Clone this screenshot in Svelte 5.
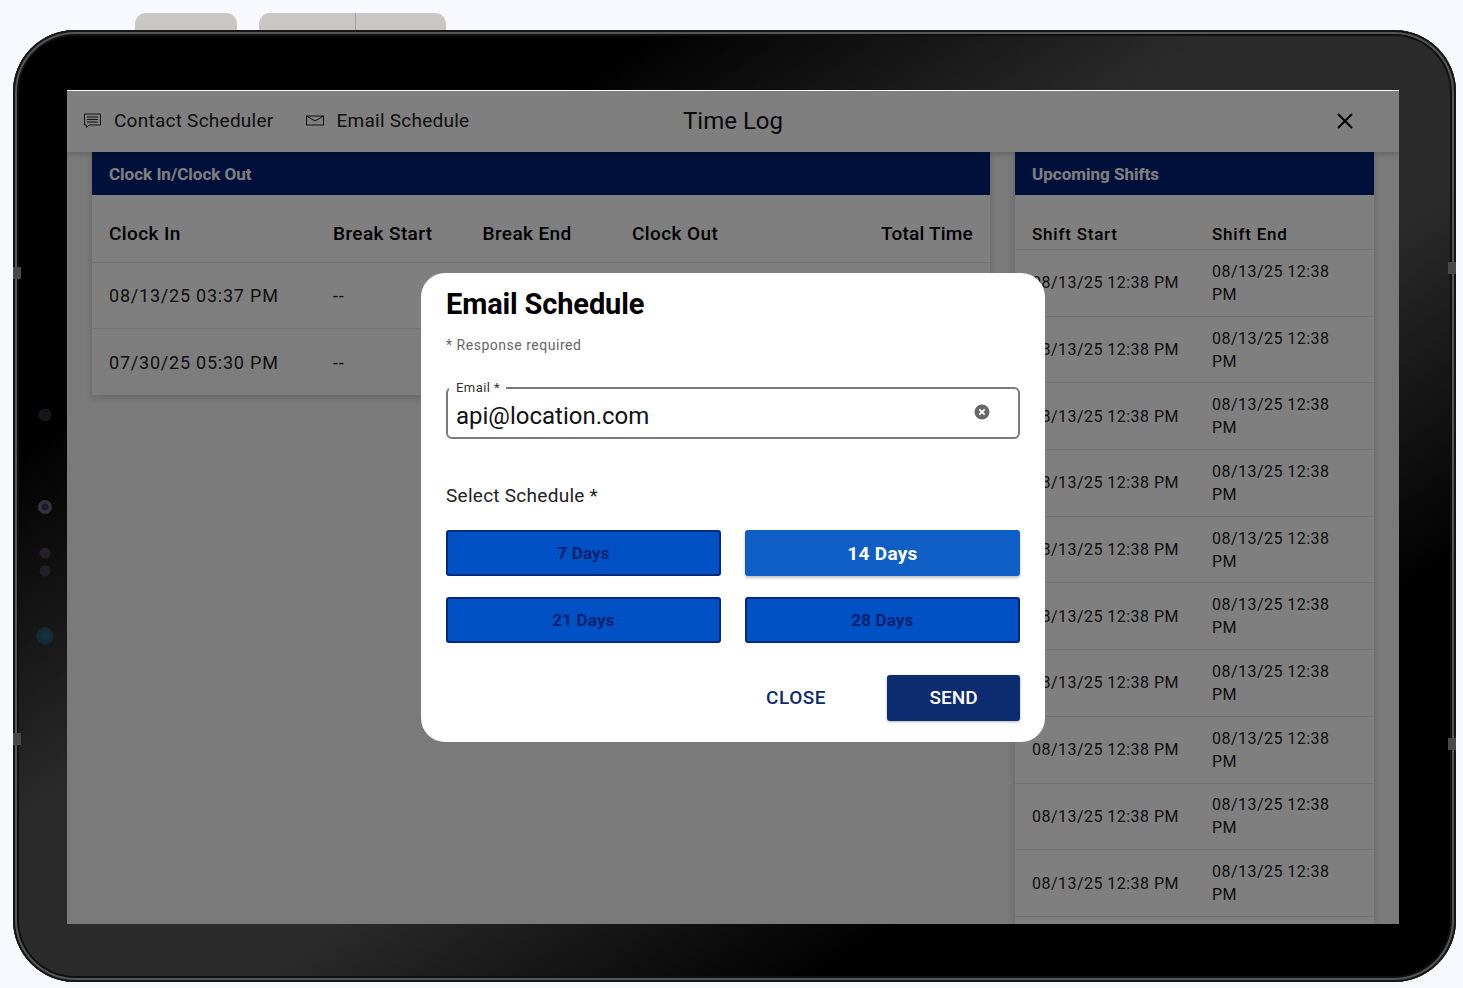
<script>
  const shifts = Array.from({ length: 10 });
</script>

<div class="page">
  <div class="hw top a"></div>
  <div class="hw top b"></div>
  <div class="hw side l1"></div>
  <div class="hw side l2"></div>
  <div class="hw side r1"></div>
  <div class="hw side r2"></div>

  <div class="device">
    <div class="sensors">
      <i class="dot s1"></i>
      <i class="dot s2"></i>
      <i class="dot s3"></i>
      <i class="dot s3b"></i>
      <i class="dot s4"></i>
    </div>

    <div class="screen">
      <header class="topbar">
        <div class="action first">
          <svg width="19" height="16" viewBox="0 0 19 16" fill="none" stroke="#222" stroke-width="1">
            <path d="M1.5 1h16v11H6l-2.500 2.500V12h-2z" />
            <path d="M4 4h11M4 6.500h11M4 9h11" />
          </svg>
          <span>Contact Scheduler</span>
        </div>
        <div class="action second">
          <svg width="18" height="11" viewBox="0 0 18 11" fill="none" stroke="#222" stroke-width="1">
            <rect x="0.500" y="1" width="17" height="9" />
            <path d="M0.500 1l8.500 5 8.500-5" />
          </svg>
          <span>Email Schedule</span>
        </div>
        <h1>Time Log</h1>
        <svg class="x" width="18" height="18" viewBox="0 0 18 18" fill="none" stroke="#000" stroke-width="2">
          <path d="M2 2l14 14M16 2L2 16" />
        </svg>
      </header>

      <main class="content">
        <section class="card left">
          <h2>Clock In/Clock Out</h2>
          <div class="lrow head">
            <span>Clock In</span><span>Break Start</span><span>Break End</span><span>Clock Out</span><span class="tot">Total Time</span>
          </div>
          <div class="lrow">
            <span>08/13/25 03:37 PM</span><span>--</span><span></span><span></span><span></span>
          </div>
          <div class="lrow shade">
            <span>07/30/25 05:30 PM</span><span>--</span><span></span><span></span><span></span>
          </div>
        </section>

        <section class="card right">
          <h2>Upcoming Shifts</h2>
          <div class="rrow head"><span>Shift Start</span><span>Shift End</span></div>
          {#each shifts as _}
            <div class="rrow"><span>08/13/25 12:38 PM</span><span class="end">08/13/25 12:38 PM</span></div>
          {/each}
        </section>
      </main>

      <div class="scrim"></div>

      <div class="modal">
        <h3>Email Schedule</h3>
        <p class="req">* Response required</p>
        <div class="field">
          <span class="legend">Email *</span>
          <span class="value">api@location.com</span>
          <svg width="16" height="16" viewBox="0 0 16 16">
            <circle cx="8" cy="8" r="7.500" fill="#666" />
            <path d="M5.300 5.300l5.400 5.400M10.700 5.300l-5.400 5.400" stroke="#fff" stroke-width="1.800" />
          </svg>
        </div>
        <p class="sel">Select Schedule *</p>
        <div class="grid">
          <button class="day">7 Days</button>
          <button class="day on">14 Days</button>
          <button class="day">21 Days</button>
          <button class="day">28 Days</button>
        </div>
        <div class="actions">
          <button class="close">CLOSE</button>
          <button class="send">SEND</button>
        </div>
      </div>
    </div>
  </div>
</div>

<style>
  :global(body) {
    margin: 0;
    background: #f8f8ff;
    font-family: Roboto, sans-serif;
  }
  .page {
    position: relative;
    width: 1463px;
    height: 988px;
    padding: 30px 7px 6px 13px;
    box-sizing: border-box;
    overflow: hidden;
  }
  .hw {
    position: absolute;
    background: #c9c7c3;
  }
  .top {
    top: 13px;
    height: 20px;
    border-radius: 11px 11px 0 0;
  }
  .top.a {
    left: 135px;
    width: 102px;
  }
  .top.b {
    left: 259px;
    width: 187px;
    background: linear-gradient(90deg, #c9c7c3 96px, #a09e9a 96px, #a09e9a 97px, #c9c7c3 97px);
  }
  .side {
    width: 8px;
    height: 12px;
    background: #484848;
    z-index: 2;
  }
  .l1 { left: 13px; top: 267px; }
  .l2 { left: 13px; top: 733px; }
  .r1 { left: 1448px; top: 262px; }
  .r2 { left: 1448px; top: 738px; }
  .device {
    position: relative;
    height: 100%;
    box-sizing: border-box;
    padding: 60px 57px 59px 54px;
    border-radius: 62px;
    background: linear-gradient(to bottom right, #000 0%, #000 22%, #2b2b2b 42%, #2b2b2b 58%, #000 78%, #000 100%);
    box-shadow:
      inset 0 0 0 2px #151515,
      inset 0 0 0 4px #565656,
      inset 0 0 0 6px #101010;
  }
  .sensors {
    position: absolute;
    left: 0;
    top: 0;
  }
  .dot {
    position: absolute;
    border-radius: 50%;
    transform: translate(-50%, -50%);
    left: 32px;
    filter: blur(0.6px);
  }
  .s1 { top: 385px; width: 13px; height: 13px; background: #161618; }
  .s2 { top: 477px; width: 14px; height: 14px; background: radial-gradient(circle, #1c1a30 30%, #343438 42%); }
  .s3 { top: 523px; width: 11px; height: 11px; background: #252028; }
  .s3b { top: 541px; width: 11px; height: 11px; background: #252028; }
  .s4 { top: 606px; width: 18px; height: 18px; background: radial-gradient(circle, #163644, #16262f 70%); }

  .screen {
    position: relative;
    height: 100%;
    background: #f6f6f6;
    overflow: hidden;
    border-top: 1px solid #fff;
    display: flex;
    flex-direction: column;
  }
  .topbar {
    position: relative;
    flex: none;
    height: 61px;
    display: flex;
    align-items: center;
    background: #fff;
    color: #222;
    box-shadow: 0 2px 6px rgba(0, 0, 0, 0.2);
    z-index: 1;
  }
  .action {
    display: flex;
    align-items: center;
    font-size: 19px;
    letter-spacing: 0.25px;
    padding-bottom: 2px;
  }
  .action.first {
    margin-left: 16px;
    gap: 12px;
  }
  .action.second {
    margin-left: 33px;
    gap: 12px;
  }
  h1 {
    position: absolute;
    left: 0;
    right: 0;
    margin: 0 0 2px;
    text-align: center;
    font-size: 24px;
    font-weight: 400;
    color: #111;
  }
  .x {
    position: absolute;
    right: 45px;
    top: 21px;
  }
  .content {
    flex: 1;
    min-height: 0;
    display: flex;
    gap: 25px;
    align-items: flex-start;
    padding: 0 25px;
    background: #f5f5f6;
  }
  .card {
    background: #fff;
    color: #222;
    box-shadow: 0 2px 8px rgba(0, 0, 0, 0.18);
  }
  .left { width: 898px; }
  .right {
    width: 359px;
    align-self: stretch;
  }
  h2 {
    margin: 0;
    height: 43px;
    line-height: 44px;
    padding-left: 17px;
    background: #002175;
    color: #fff;
    font-size: 17px;
    font-weight: 700;
  }
  .lrow {
    display: grid;
    grid-template-columns: 224px 149.500px 149.500px 1fr auto;
    align-items: center;
    height: 66px;
    padding: 0 17px;
    font-size: 18px;
    letter-spacing: 0.78px;
    border-bottom: 1px solid #e8e8e8;
    box-sizing: border-box;
  }
  .lrow.shade {
    background: #fbfbfb;
    border-bottom: 0;
  }
  .lrow.head {
    height: 68px;
    padding-top: 9px;
    font-size: 19px;
    font-weight: 500;
    letter-spacing: 0.4px;
    color: #000;
  }
  .lrow.head .tot {
    letter-spacing: 0.2px;
  }
  .rrow {
    display: grid;
    grid-template-columns: 180px 130px;
    align-items: center;
    height: 66.7px;
    padding: 0 17px;
    font-size: 16px;
    line-height: 23px;
    letter-spacing: 0.47px;
    border-bottom: 1px solid #e8e8e8;
    box-sizing: border-box;
    white-space: nowrap;
  }
  .rrow .end {
    white-space: normal;
  }
  .rrow.head {
    height: 55px;
    padding-top: 25px;
    font-size: 17px;
    font-weight: 500;
    letter-spacing: 0.78px;
    color: #000;
  }
  .scrim {
    position: absolute;
    inset: 0;
    background: rgba(0, 0, 0, 0.5);
    z-index: 2;
  }
  .modal {
    position: absolute;
    z-index: 3;
    left: 354px;
    top: 182px;
    width: 624px;
    height: 469px;
    box-sizing: border-box;
    padding: 13px 25px 0;
    border-radius: 24px;
    background: #fff;
    color: #111;
  }
  h3 {
    margin: 0;
    font-size: 29px;
    line-height: 36px;
    font-weight: 700;
    letter-spacing: -0.15px;
    color: #000;
  }
  .req {
    margin: 13px 0 0;
    font-size: 14px;
    line-height: 20px;
    letter-spacing: 0.52px;
    color: #666;
  }
  .field {
    position: relative;
    margin-top: 32px;
    height: 52px;
    box-sizing: border-box;
    padding: 0 28px 0 8px;
    border: 2px solid #7a7a7a;
    border-radius: 6px;
    display: flex;
    align-items: center;
    justify-content: space-between;
    font-size: 24px;
  }
  .field svg {
    margin-bottom: 2px;
  }
  .legend {
    position: absolute;
    left: 1px;
    top: -9px;
    padding: 0 6px 0 7px;
    background: #fff;
    font-size: 13px;
    line-height: 16px;
    letter-spacing: 0.45px;
    color: #333;
  }
  .value {
    padding-top: 6px;
    color: #111;
  }
  .sel {
    margin: 45px 0 0;
    font-size: 19px;
    line-height: 24px;
    letter-spacing: 0.27px;
    color: #222;
  }
  .grid {
    margin-top: 22px;
    display: grid;
    grid-template-columns: 1fr 1fr;
    gap: 21px 24px;
  }
  button {
    font-family: inherit;
    cursor: pointer;
  }
  .day {
    height: 46px;
    border: 2px solid #00287f;
    border-radius: 3px;
    background: #0052c4;
    color: #001f6e;
    font-size: 17px;
    font-weight: 700;
    letter-spacing: 0.2px;
    padding: 0;
  }
  .day.on {
    background: #0f5ec6;
    border-color: #0f5ec6;
    color: #fff;
    font-size: 19px;
    letter-spacing: 0.3px;
    box-shadow: 0 2px 3px rgba(0, 0, 0, 0.25);
  }
  .actions {
    margin-top: 32px;
    display: flex;
    justify-content: flex-end;
    align-items: center;
    gap: 61px;
  }
  .close {
    border: 0;
    background: none;
    color: #0d2c70;
    font-size: 19px;
    font-weight: 500;
    letter-spacing: 0.5px;
    padding: 0 0 2px;
  }
  .send {
    width: 133px;
    height: 46px;
    border: 0;
    border-radius: 3px;
    background: #0d2c70;
    color: #fff;
    font-size: 19px;
    font-weight: 500;
    padding: 0 0 2px;
    box-shadow: 0 1px 3px rgba(0, 0, 0, 0.3);
  }
</style>
